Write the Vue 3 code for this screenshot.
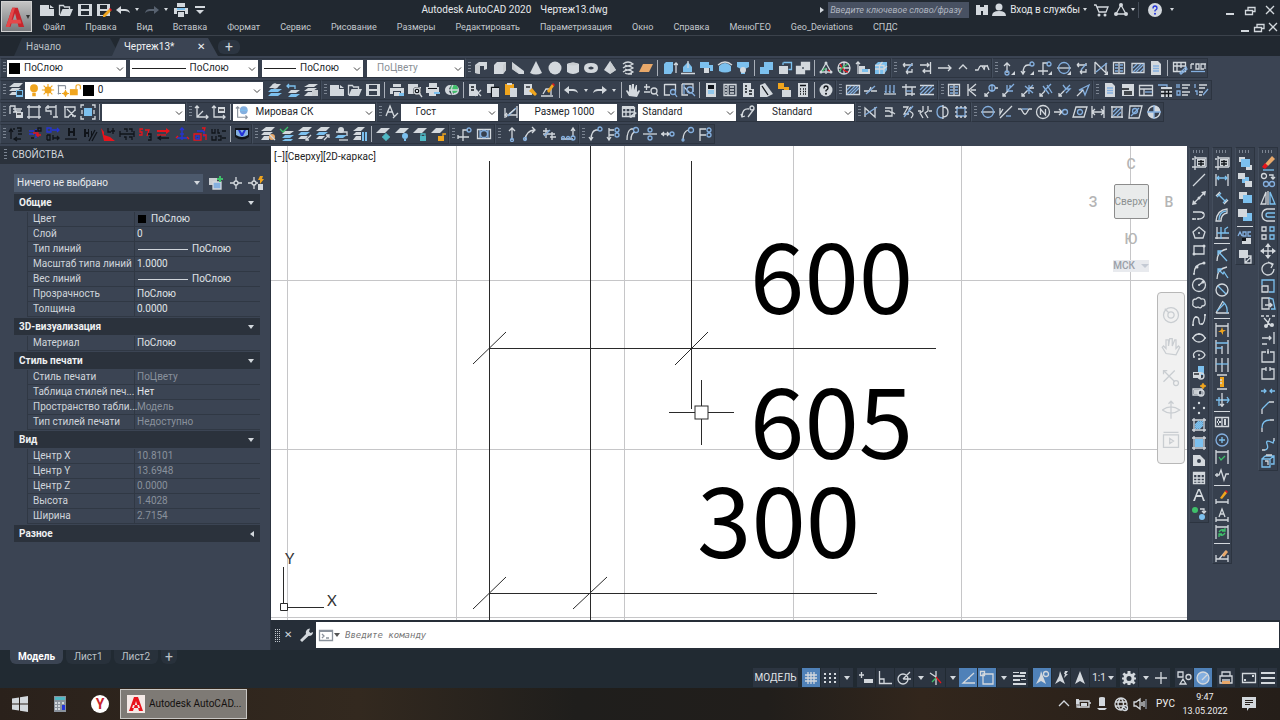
<template>
  <div class="app">
    <header class="top">
      <button class="logo" aria-label="Меню приложения">
        <svg class="logo-a" viewBox="0 0 24 24">
          <path d="M2 23L9 2h6l7 21h-6l-4-15-5 15z" fill="#c8242b" />
          <path d="M2 23L9 2h3L6 23z M7 15h11l1 4H6z" fill="#e5484a" />
        </svg>
        <i class="caret"></i>
      </button>
      <div class="top-rows">
        <div class="title-row">
          <div class="qat">
            <button v-for="(q, i) in quick" :key="i" :class="q === '>' ? 'q-more' : 'q-btn'" :aria-label="q">
              <i v-if="q === '>'" class="caret small"></i>
              <Ico v-else :name="q" />
            </button>
          </div>
          <h1 class="title"><span>Autodesk AutoCAD 2020</span><span>Чертеж13.dwg</span></h1>
          <div class="info">
            <i class="caret right"></i>
            <input class="search" type="text" aria-label="Поиск" placeholder="Введите ключевое слово/фразу">
            <button class="q-btn" aria-label="Найти"><Ico name="binoc" /></button>
            <button class="login"><Ico name="user" />Вход в службы<i class="caret small"></i></button>
            <button class="q-btn" aria-label="Магазин"><Ico name="cart" /></button>
            <button class="app-btn" aria-label="Приложения"><Ico name="apps" /><i class="caret small"></i></button>
            <button class="help-btn" aria-label="Справка"><Ico name="helpSolid" /><i class="caret small"></i></button>
            <div class="win">
              <button v-for="w in ['min', 'restore', 'close']" :key="w" :aria-label="w"><Ico :name="w" /></button>
            </div>
          </div>
        </div>
        <nav class="menu">
          <a v-for="m in menu" :key="m" href="#">{{ m }}</a>
          <div class="win doc-win">
            <button v-for="w in ['min', 'restore', 'close']" :key="w" :aria-label="w"><Ico :name="w" /></button>
          </div>
        </nav>
      </div>
    </header>

    <div class="doc-tabs">
      <button class="doc-tab">Начало</button>
      <button class="doc-tab active">Чертеж13*<span class="x">✕</span></button>
      <button class="doc-add" aria-label="Новый чертеж">+</button>
    </div>

    <div class="toolbars">
      <div v-for="(row, r) in rows" :key="r" class="bar-row">
        <div v-for="(g, gi) in row.groups" :key="gi" class="bar" :style="{ flexGrow: g.w }">
          <i class="grip"></i>
          <template v-for="(it, k) in g.items" :key="k">
            <i v-if="it === '|'" class="sep"></i>
            <button v-else-if="it === '>'" class="dd" aria-label="Список"><i class="caret small"></i></button>
            <div v-else-if="it.label" class="combo" :class="{ off: it.off }" :style="{ flexGrow: it.w }">
              <Ico v-for="n in it.icons || []" :key="n" :name="n" />
              <i v-if="it.swatch" class="swatch"></i>
              <i v-if="it.line" class="line" :style="{ flexGrow: it.line }"></i>
              <select :aria-label="it.label" :style="{ paddingLeft: (it.pad || 0) + 'px' }" :disabled="it.off">
                <option>{{ it.text }}</option>
              </select>
              <svg class="chev" viewBox="0 0 8 8"><path d="M1 2.5l3 3 3-3" /></svg>
            </div>
            <button v-else class="tool" :aria-label="it"><Ico :name="it" /></button>
          </template>
        </div>
        <div class="rest" :style="{ flexGrow: row.rest }"></div>
      </div>
    </div>

    <div class="work">
      <aside class="props">
        <h2 class="props-title"><i class="grip"></i>СВОЙСТВА</h2>
        <div class="props-pick">
          <div class="pick">
            <select aria-label="Выбранные объекты"><option>Ничего не выбрано</option></select>
            <i class="caret"></i>
          </div>
          <button aria-label="Добавить"><Ico name="pickAdd" /></button>
          <button aria-label="Выбрать"><Ico name="pickCross" /></button>
          <button aria-label="Быстрый выбор"><Ico name="pickQuick" /></button>
        </div>
        <section v-for="s in sections" :key="s.name" class="sect">
          <button class="sect-head">{{ s.name }}<i class="caret" :class="{ left: !s.rows.length }"></i></button>
          <table v-if="s.rows.length">
            <tbody>
              <tr v-for="p in s.rows" :key="p[0]">
                <th scope="row">{{ p[0] }}</th>
                <td :class="{ dim: p[2] === 'dim' }">
                  <div class="val">
                    <i v-if="p[2] === 'swatch'" class="swatch"></i>
                    <i v-if="p[2] === 'line'" class="line"></i>{{ p[1] }}
                  </div>
                </td>
              </tr>
            </tbody>
          </table>
        </section>
      </aside>

      <div class="center">
        <main class="canvas">
          <svg class="drawing" width="100%" height="100%">
            <g class="grid">
              <line v-for="x in gridX" :key="'x' + x" :x1="x" :x2="x" y1="0" y2="100%" />
              <line v-for="y in gridY" :key="'y' + y" x1="0" x2="100%" :y1="y" :y2="y" />
            </g>
            <g class="ink">
              <path d="M218.500 15V474M319.500 0V474M420.500 15V263" />
              <path d="M218 202.500H665M218 447.500H606" />
              <path d="M202 218l33-32M404 219l33-33M202 463l33-32M302 463l34-32" />
            </g>
            <g class="dims">
              <text x="479" y="168">600</text>
              <text x="479" y="313">605</text>
              <text x="426" y="412">300</text>
            </g>
            <g class="cursor">
              <path d="M398 266.500h26M437 266.500h26M430.500 234v26M430.500 273v26" />
              <rect x="424" y="260" width="13" height="13" />
            </g>
            <g class="ucs">
              <path d="M12.500 421v37M17 461.500h36M9.500 457.500h7v7h-7z" />
              <text x="14" y="418">Y</text>
              <text x="56" y="460">X</text>
            </g>
          </svg>
          <div class="vp-label">[−][Сверху][2D-каркас]</div>
          <div class="cube">
            <span class="n">С</span>
            <span class="w">З</span>
            <button class="face">Сверху</button>
            <span class="e">В</span>
            <span class="s">Ю</span>
            <button class="wcs">МСК<i class="tri"></i></button>
          </div>
          <div class="navbar">
            <button v-for="n in ['wheel', 'navPan', 'navZoom', 'navOrbit', 'navShow']" :key="n" :aria-label="n">
              <Ico :name="n" />
            </button>
          </div>
        </main>
      </div>

      <div class="rails">
        <div v-for="(c, ci) in rails" :key="ci" class="rail">
          <div class="bar tall" :style="{ flexGrow: c.h }">
            <i class="grip"></i>
            <template v-for="(it, k) in c.items" :key="k">
              <i v-if="it === '|'" class="sep"></i>
              <button v-else class="tool" :aria-label="it"><Ico :name="it" /></button>
            </template>
          </div>
          <div class="rest" :style="{ flexGrow: 474 - c.h }"></div>
        </div>
      </div>

      <div class="cmd">
        <i class="cmd-grip"></i>
        <button class="cmd-x" aria-label="Закрыть">✕</button>
        <button class="cmd-w" aria-label="Настройка"><Ico name="wrench" /></button>
        <div class="cmd-box">
          <Ico name="prompt" /><i class="caret"></i>
          <input type="text" aria-label="Команда" placeholder="Введите команду">
        </div>
      </div>
    </div>

    <footer class="status">
      <div class="layouts">
        <button class="on">Модель</button>
        <button>Лист1</button>
        <button>Лист2</button>
        <button class="add" aria-label="Новый лист">+</button>
      </div>
      <div class="modes">
        <button class="mode-text">МОДЕЛЬ</button>
        <template v-for="(m, i) in modes" :key="i">
          <button v-if="m === '>'" class="mode-dd" aria-label="Список"><i class="caret"></i></button>
          <button v-else-if="m === '1:1'" class="mode-scale">1:1<i class="caret"></i></button>
          <i v-else-if="m === '|'" class="mode-gap"></i>
          <button v-else class="mode" :class="{ on: m[0] === '*' }" :aria-label="m">
            <Ico :name="m.replace('*', '')" />
          </button>
        </template>
      </div>
    </footer>

    <div class="taskbar">
      <button class="task" aria-label="Пуск"><Ico name="windows" /></button>
      <button class="task" aria-label="Калькулятор"><Ico name="calcApp" /></button>
      <button class="task" aria-label="Браузер"><span class="ya">Y</span></button>
      <button class="task-app"><span class="task-ico"><Ico name="acad" /></span>Autodesk AutoCAD...</button>
      <div class="tray">
        <Ico name="up" /><Ico name="battery" /><Ico name="mic" /><Ico name="globe" /><Ico name="sound" />
        <span class="lang">РУС</span>
        <time class="clock"><span>9:47</span><span>13.05.2022</span></time>
        <Ico name="note" />
      </div>
    </div>
  </div>
</template>

<script setup>
import { h } from 'vue';

// lower case = stroke, upper case = fill
const colors = {
  w: '#d3d8dd', b: '#84afdf', c: '#7cc0ee', g: '#8a929c', r: '#e8141c', u: '#2434d8',
  k: '#10141a', y: '#f0a51e', n: '#3fbf6a', o: '#e8a86a', l: '#c9cdd1', d: '#586270', t: '#4fb8c4',
};

const page = 'W M3 1h7l3 3v11H3z';
const icons = {
  new: 'W M1 3h9v4h5v7H1z M11 3l4 3h-4z',
  open: 'w M1.500 13V3.500h4l1 1.500h5v2;W M4.500 7H15l-3 7H1.500z',
  save: 'W M1 2h14v12H1z M4 3v4h8V3z M4 9v4h8V9z',
  saveas: 'W M1 2h13v12H1z M4 3v4h7V3z M4 9v4h7V9z;Y M7 13l6-6 2 2-6 6H7z;R M13 7l1-1 2 2-1 1z',
  undo: 'W M1 8l5-4v3h4q4 0 5 4-2-2-5-2H6v3z',
  redo: 'W M15 8l-5-4v3H6q-4 0-5 4 2-2 5-2h4v3z',
  redoDim: 'D M15 8l-5-4v3H6q-4 0-5 4 2-2 5-2h4v3z',
  print: 'W M4 1h8v4H4z M1 6h14v6h-3V9H4v3H1z;C M4 6h8v2H4z;W M5 10h6v5H5z',
  plot: 'W M4 2h8v3H4z M1 6h14v6h-3V9H4v3H1z M5 10h6v4H5z;C M10 11h5v3h-5z',
  preview: 'W M1 2h10v3h3v7H1z;K @10,9,4;w @10,9,3 M12 11l3 4;W M9 8h2v2H9z',
  publish: 'W @6,8,5 @10,8,5;N @10,7,4;w M5 8h9M9 3q-3 5 0 10',
  batch: 'W M4 1h8v4H4z M1 5h13v6H1z;K M3 6h9v1H3z;W M4 9h7v5H4z;C M9 10h6v2H9z',
  menuMore: 'W M3 4h10v2H3z M4 8h8l-4 4z',
  binoc: 'W M2 3h4v2h4V3h4v10h-5V9H7v4H2z',
  user: 'W @8,5,3.500 M1 14q0-5 7-5t7 5z',
  cart: 'w M1 3h2l3 7h7l2-5H4;W @6,13,1.500 @12,13,1.500',
  apps: 'w M8 3L3 12h10z;W @8,3,2 @3,12,2 @13,12,2',
  helpSolid: 'W @8,8,7;u M6 6.500q0-2.500 2-2.500t2 2.200q0 1-2 2.300v1;U @8,11.800,1',
  help: 'W @8,8,6.500;k M6 6.500q0-2.500 2-2.500t2 2.200q0 1-2 2.300v1;K @8,11.800,1',
  min: 'W M4 11h8v2H4z',
  restore: 'w M3.500 8.500h7v4h-7zM6 8V5.500h7v4h-2',
  close: 'w M4 4l8 8M12 4l-8 8',
  wall: 'W M2 5l4-3h8v7l-3 1V6H7v8l-5-1z;L M2 5h5v9l-5-1z',
  box: 'W M2 5l3-3h9v8l-3 4H2z;L M11 5l3-3v8l-3 4z',
  wedge: 'W M2 2l12 9v3l-5 0L2 9z;L M2 2v7l7 5z',
  cone: 'W M8 1l6 12q-6 3-12 0z',
  sphere: 'W @8,8,6.500',
  cylinder: 'W M2 4q6-3 12 0v8q-6 4-12 0z;L M2 4q6 3 12 0-6-3-12 0z',
  torus: 'W M1 8q0-5 7-5t7 5-7 5-7-5z M5 8q3 3 6 0-3-3-6 0z',
  pyramid: 'W M8 1l6 9-6 4-6-4z;L M8 1l6 9-6 4z',
  helix: 'w M3 4q5-4 10 0-5 3-8 1M3 8q5-4 10 0-5 3-8 1M3 12q5-4 10 0-5 3-8 1M8 14h4',
  planar: 'O M5 4h10l-4 8H1z',
  extrude: 'C M2 4l2-2h7v9l-2 3H2z;w M14 13V3M12 5l2-2 2 2',
  presspull: 'C M3 12V7l5-5 4 5v5z;w M1 13.500h14M8 8V1',
  sweep: 'C M2 2h9v3h4v6h-3V8H2z;W M6 8h5v5H6z',
  revolve: 'C M2 6q6-6 12 0v5q-6 3-12 0z;w M1 5q7-6 14 0',
  loft: 'C M2 2h12v5l-4 2v5H6V9L2 7z;W @8,10,3',
  union: 'C M6 2h9v8h-4v4H2V7h4z',
  subtract: 'W M2 6h9v8H2z;c M6.500 2.500h8v7h-3M6 5V2.500',
  intersect: 'W M1 6h9v8H1z M6 2h9v8H6z;w M1.500 6.500h8v7h-8zM6.500 2.500h8v7h-8z',
  solidrot: 'w M8 3l5 9H3z M8 8v6;n M8 8l-5 4;r M10 10l3 2;W @8,3,1.500 @3,12,1.500 @13,12,1.500',
  orbit: 'w @8,8,6 M8 2v12M2 8h12;r M4 4q4 8 8 8;n M12 4q-8 4-8 8',
  flat: 'w M3 14V2M1 4l2-2 2 2;W M4 6h6v3h5v5H4z;C M7 9h6v3H7z',
  solidEdit: 'C M2 5l3-3h9v8l-3 4H2z;w M2 9h9l3-3M6.500 14V5l3-3M2 5.500h9V14',
  dimFlag: 'w M3 5h9M3 5l2-2M3 5l2 2M12 3v3M6 12h6v-3M6 12l2-2M6 12l2 2;b M12 4l-5 6',
  dimFlag2: 'w M2 5h9M9 3l2 2-2 2M12.500 2v12M5 11h7M7 9l-2 2 2 2',
  arrowR: 'w M1 8h13M11 5l3 3-3 3',
  peak: 'w M4 9l4-4 4 4',
  wave: 'w M1 10h3l2-4M6 6h7M8 6l2 3M13 5l2 5M10 10l1-4',
  lead1: 'w M7 13V3M4 6l3-3 3 3;b @7,13,2;W M15 15v-4l-4 4z',
  lead2: 'w M4 14q0-9 5-9h2M2 11l2 3 2-3;b @13,4,2;W M15 15v-4l-4 4z',
  lead3: 'w M1 11h10M6 15V3h5;b @12,4,2;W M15 15v-4l-4 4z',
  section: 'w M1 8h14;b @8,8,5.500;W M15 15v-4l-4 4z',
  zline: 'w M2 2v12M2 2l11 11V3;b M3 12l11-9;W M15 15v-4l-4 4z',
  column: 'w M2.500 2.500h11v11h-11zM8 2v12;b M4 5h3M4 8h3M4 11h3M9 5h3M9 8h3M9 11h3',
  hatchS: 'w M2 3.500h12v9H2z;b M3 12l8-8M6 12l8-8M3 8l4-4M10 12l4-4',
  sheet: page + ';b M5 6h6M5 8.500h6M5 11h6',
  tableEdit: 'w M1.500 2.500h12v9h-12zM1 6h12M5 3v9M9 3v5;b M8 13l6-6 1 2-6 5z',
  gost: 'b M1 11.500h14;w M1 4v5M1 4h3M6 4h3v5H6zM14 4h-3v5h3M14 4h2M15 4v5',
  layers: 'W M6 1h9l-4 4H1z M4 6h9l-4 3H1z M4 10h8l-3 3H1z;C M8 8h7v7H8z;k M9 10h5M9 12h5',
  layA: 'W M6 2h8l-4 4H2z;C M4 7h11l-4 3H1z M4 11h11l-4 3H1z;w @8,4,2',
  layB: 'W M6 8h9l-4 3H3z;C M6 12h9l-4 3H3z;c M2 4h8v3M4 2L2 4l2 2',
  layC: 'W M6 2h9l-4 3H1z M5 6h9l-4 3H1z M5 10h4v4H1z;L M9 8h6v6H9z',
  bulb: 'Y @8,6,4.500 M6 11h4v4H6z',
  sun: 'Y @8,8,4;y M8 1v14M1 8h14M3 3l10 10M13 3L3 13',
  frz: 'g M3 3h9M4 2v11M12 3v4M3 12h4;Y @12,12,2.500;y M12 8v8M8 12h8',
  unlock: 'Y M1 7h9v7H1z;y M8 7V4q0-2 2.500-2T13 4v3',
  cut: 'W M2 2h7v5l2 2v5H2z;k M4 5h3M4 8h3;w M8 8l6 6M14 8l-6 6',
  copyclip: 'W M2 2h7v9H2z;k M6.500 5.500h7v9h-7z;W M7 6h7v9H7z',
  paste: 'Y M2 2h9v11H2z;W M7 6h7v9H7z;W M4 1h5v2H4z',
  match: 'W M2 2h8v11H2z;Y M7 9l3-3 5 6-2 2z;k M4 5h4',
  edit: 'w M1 14h12M3 12l3-5h5v6;Y M7 9l5-7 2 2-5 7z;R M12 2l1-1 2 2-1 1z',
  hand: 'W M4 14L1 9l1-1 2 2V3h2v5l1-6h2v6l2-5h1v7l2-2 1 1-3 6z',
  zoomrt: 'w M3.500 2v6M1 5h6M1 10h6;w @11,9,3 M13 11l2 3',
  zoomwin: 'w M2.500 2.500h11v7M2.500 2v11H8;b @11,10,2.500 M13 12l2 3',
  zoomprev: 'w M2 2h11v8M2 2v11h6M4 5l6 6;b @10,8,3 M12 11l3 3M4 2v10',
  propPal: 'W M3 1h10v14H3z;K M5 3h6v4H5z;c M5 9h6M5 11h6',
  dcenter: 'w M2 2.500h12v11H2zM6 3v10M8 5h4M8 8h4M8 11h4M3 5h2M3 8h2M3 11h2',
  palettes: 'W M3 1h8v6h3v8H3z;k M5 4h2M5 7h2M5 10h2M9 9h3M9 12h3',
  sheetset: 'W M2 3l5-2 8 11-6 3H2z;k M4 4l6 9',
  markup: 'Y M1 1h6v6H1z M7 5h5v5H7z;W M5 8h9v7H5z',
  calc: 'W M3 1h10v14H3z;k M5 3.500h6M5 7h1M8 7h1M10 7h1M5 9.500h1M8 9.500h1M10 9.500h1M5 12h1M8 12h1M10 12h1',
  hatchA: 'w M1.500 3.500h13v9h-13z;b M2 12l8-8M5 12l8-8M8 12l6-6M2 8l4-4',
  breakA: 'w M1 9h5l2-4M8 9h6;b M3 12l9-8',
  piles: 'w M2 12h12;b M4 3v8M8 3v8M12 3v8M3 9l1 2M7 9l1 2M11 9l1 2',
  axes: 'w M5 2v12M1 5h14M11 5v9M5 12h9;b M5 9h6',
  hatchB: 'w M1 3.500h14M1 12.500h14;b M1 12l8-8M5 12l8-8M9 12l6-6M1 8l4-4',
  brandK: 'w M4 2v12M12 2L5 8l7 6M7 8h5',
  node: 'b @9,6,3 M9 2v8;w M2 14l4-4M2 11v3h3M12 6h3',
  node1: 'b M6 3v6h6M7 8l6-6M9 3v4;w M2 14l5-5M2 11v3h3',
  node2: 'b M5 4l8 7M13 3L6 10M9 3v9;w M2 14l5-5M2 11v3h3M10 6h4',
  node3: 'b M5 4l6 8M9 3l5 8M13 2L6 9;w M2 14l5-5M2 11v3h3',
  node4: 'b M6 3l3 4h4l-4 4M13 3L7 9;w M2 14l5-5M2 11v3h3',
  node5: 'b M4 8l10-5-4 10-2-5z;w M2 14l6-6',
  tblDoc: 'W M2 2h12v12H2z;k M2 7h7M4 10h8M4 12h8',
  tblForm: 'w M1.500 3.500h13v10h-13zM1 7h14M6 7v6;b M7 10h7',
  tblCalc: 'b M1 3h9v8;W M4 5h11v10H4z;k M4 8h11M8 8v7M11.500 8v7M4 11.500h11',
  listA: 'w M7 3h8M7 6h6M7 10h8M7 13h6;b M2 2v4M4 2v4M2 9h3v4H2z',
  listB: 'w M6 3h8M6 6h6M6 10h4M6 13h3;b M2 2v4M2 9h2v4M10 13l5-6',
  xref1: 'w M2 2h5v5h6M2 2v8M5 5h9M5 8h4;W M8 8h7v6H8z;k M9 10h4',
  xref2: 'w M3 3h10v10H3zM1 3h3M12 13h3M3 1v3M13 1v3M13 12v3M3 12v3M1 13h2M13 3h2',
  xref3: 'w M2 3h10v10M2 3v4h5v4M4 1v4M12 1v4M9 13h5',
  xref4: 'w M2 3h11v4M3 2v11h4M5 5l8 8M13 6L6 13M10 12h4',
  xref5: 'C M4 4h8v8H4z;w M1 4V1h3M12 1h3v3M15 12v3h-3M4 15H1v-3M2 6v4M14 6v4',
  ucs: 'w M3 2v11h11M1 4l2-2 2 2M12 11l2 2-2 2M3 13l6-6',
  ucsN: 'w M3 2v11h11M1 4l2-2 2 2M12 11l2 2-2 2;W M7 3h7v6H7z;k M8 6h5',
  ucsWorld: 'g M3 2v12h11M1 4l2-2 2 2M12 12l2 2-2 2;B @10,6,4.500;c M6 6h8',
  textStyle: 'w M2 12L6 2l4 10M3 8h6M9 14l5-5',
  dimStyle: 'w M2 4v10M14 2v12M2 11h12;b M5 12l8-8;w M4 9l-2 2 2 2M6 10l6-5',
  tblStyle: 'W M1 2h12v3H1z;w M1.500 3.500h12v9h-12zM1 8h12M5 4v9M9 4v9;W M8 13l6-5 2 1-6 5z',
  mlStyle: 'w M2 13q0-9 7-8M1 10l1 3 3-1M8 13l6-8;w @12,4,2',
  zz: 'w M2 13V4l10 9V3;b M2 11l12-8',
  br1: 'w M4 4h7v4l3 2M4 12h7V9l-3-2H4',
  br2: 'w M4 3h5l-4 7h5M12 3q-4 3 0 5t0 6;b M5 13l9-11',
  br3: 'w M6 2v5l-3 2 3 5M11 2v5l-3 2 3 5M12 7h3M1 7h3',
  cyl2: 'b M8 2Q2 2 2 8t6 6;w M8 1v14M8 3q5 0 5 5t-5 5',
  cloudR: 'b M4 4h8v8H4z;w M3 3h2M7 3h2M11 3h2M3 7v2M13 7v2M3 13h2M7 13h2M11 13h2M3 3v2M13 3v2M3 11v2M13 11v2',
  lev1: 'w M1 8h14;b @8,8,5.500',
  lev2: 'w M2 14L14 2M2 4v6l3-5;b M8 12h5',
  lev3: 'w M1 5h3l3 5M15 5h-3l-3 5M7 10h2;b M5 5h6',
  north: 'w @8,8,6.500;w M5.500 11V5l5 6V5',
  pt: 'w M1 8h8M6 5l3 3-3 3;b @12,8,2.500',
  parall: 'w M4 3h11l-3 10H1z;b @8,8,2.500',
  dimH: 'w M2 2v12M14 2v12M2 8h12M5 5L2 8l3 3M11 5l3 3-3 3',
  area: 'w M2 3h12M2 13h12M3 2v12M13 2v12;b M4 12l8-8M4 8l4-4M8 12l4-4',
  area2: 'w M3 2h12l-3 12H2z;b @8,7,2.500 M4 12l8-8',
  target: 'w @8,8,6;W M8 2v6h6q0-6-6-6z M8 14V8H2q0 6 6 6z;b M8 1v14M1 8h14',
  geo1: 'k M3 13V4M1 6l2-3 2 3M5 3h2M9 2h4v3h-3M13 13H7M9 11l-3 2 3 2M10 8h4',
  geo2: 'u M2 5h5M2 8h5M9 3v9;r M6 7h5v4M9 9h5;k M11 2h3v3h-3zM8 5h2M4 12h3',
  geo3: 'u M2 2h4v4H2zM7 4h7M12 2l2 2-2 2;k M2 9v5M2 9h3v5H2M8 9v5M8 12h6M12 10l2 2-2 2',
  geo4: 'K M5 2h2v3h3V2h2v8h-2V7H7v3H5z;k M2 13h12',
  geo5: 'K M2 3h2v3h2V3h1v8H6V8H4v3H2z M9 5h1v5H9z;k M7 15L13 4M10 15l5-9',
  geo6: 'R M1 2l3 4v3l6 2 5 4H4z;k M8 2v4h3M13 2v6M11 5h4',
  geo7: 'k M1 8h14M1 5v6M15 5v6M5 3h3v3M10 3h3v3M5 11h2v3M10 11h3v3',
  geo8: 'r M6 3H3v3h2v3H2M8 4h4l-2 6;k M11 8h3v3h-2M14 11v3h-3',
  geo9: 'R M2 4h9V2l4 3-4 3V6H2z;r M2 9h9;k M14 12H3M6 10l-3 2 3 2',
  geo10: 'u M8 2v12M6 4l2-2 2 2M3 12h10;r M2 12l2-2M13 11l2 2;u M6 8h4',
  geo11: 'r M2 8h7v6H2z;u M5 5h7v6M4 10h3v3H4z;r M10 2h3l-1 3M11 9h3v5',
  geo12: 'k M2 3v4h3V3M8 3v4h2M12 5h4M2 10v4h4v-4M8 10h3v4H8M12 12h4',
  geoApp: 'K M1 2h14v9q-7 5-14 0z;B M2 4h12v5q-6 4-12 0z;U M4 4h2l2 3 2-3h2l-3 6H7z',
  lw1: 'W M6 1h9l-4 4H1z M4 6h9l-4 3H1z M4 10h5v4H1z;O @12,11,3;w M9 8l6 6',
  lw2: 'n M1 3l3 3 5-5;W M6 5h9l-4 3H3z;C M6 9h9l-4 3H3z M6 13h8l-2 2H3z',
  lw3: 'W M6 1h9l-4 4H1z;C M4 6h9l-4 3H1z;W M4 10h7l-3 3H1z;w M14 9l-5 5M9 11v3h3',
  lw4: 'W M6 1h9l-4 4H1z;C M4 6h9l-4 3H1z;W M4 10h6l-3 3H1z;w M9 14l5-5M11 9h3v3',
  lw5: 'W @7,4,3;w M2 6h11v4;C M4 9h9l-4 3H1z;w M5 14h9',
  lw6: 'W M6 1h7l-4 4H1z M4 6h5v3H1z M4 10h5v4H1z;C M10 6h2v9h-2z M13 6h2v9h-2z',
  ls1: 'W M6 2h9l-5 5H1z;T @11,11,3;t M11 7v8M7 11h8',
  ls2: 'W M6 2h9l-5 5H1z;C @11,10,3 M10 13h2v2h-2z',
  ls3: 'W M6 2h9l-5 5H1z;T M8 10h6v5H8z;t M9 10V8h4v2',
  ls4: 'W M6 2h9l-5 5H1z;Y M8 10h6v5H8z;y M13 10V8h3',
  sp1: 'w M1 11h11M6 15V4h5M1 9v4;b @12,4,2',
  sp2: 'w M1.500 3.500h13v9h-13z;b @8,8,3.500 M4 4v8M12 4v8',
  sa1: 'w M8 14V2M5 5l3-3 3 3;b @8,14,1.500',
  sa2: 'w M3 14Q4 5 12 4M10 1l3 3-3 3;b @3,13,1.500',
  sa3: 'w M5 2v10M2 8h12M2 5h6M9 11h6M11 6v8;b M3 10l6-6',
  sa4: 'w M1 13h12M13 3v8M11 5l2-3 2 3;b @3,12,1.500 @8,12,1.500 @13,12,2',
  sb1: 'w M4 14q0-9 5-10h2M2 11l2 3 2-3;b @13,3,2',
  sb2: 'w M4 2v12M2 11l2 3 2-3M4 4h5M4 9h5;b @12,4,2 @12,9,2',
  sb3: 'w M3 14q0-9 4-11h3M7 14q0-7 4-8;b @12,4,2.500',
  sb4: 'w M1 8h14;b @8,4,2 @8,12,2',
  sb5: 'w M1 8h9M4 6L2 8l2 2M7 6l2 2-2 2;b @12,8,2',
  sb6: 'w M4 14q0-8 5-10;b @12,4,2.500 @4,14,1',
  sb7: 'w M3 15V3h6M3 9h6;b @12,4,2 @12,9,2',
  block: 'w M3 4h-2M4 1v14M1 12h14M4 3h11v9;W M6 4h8v7H6z;k M7 6.500h6M7 9h6M10 5v6',
  line: 'w M2 14L14 2',
  xline: 'w M3 13L13 3;W M1 15l1-5 4 4z M15 1l-5 1 4 4z @8,8,1.500',
  pline: 'w M2 5h7q5 0 4 4-1 3-6 3M2 12h3;W @7,12,1 @2,12,1 @12,6,1',
  polygon: 'w M8 2l6 5-2 6H4L2 7z;W @8,8,1',
  rect: 'w M3 4h10v8H3z;W @3,12,1.500 @13,4,1.500',
  arc: 'w M3 14Q3 4 13 3;W @3,14,1 @6,7,1.500 @13,3,1.500',
  circle: 'w @8,8,6.500 M8 8l4-3;W @8,8,1 @12,5,1.500',
  cloud: 'w M4 12q-3-1-2-4-1-4 3-4 3-3 5 0 4-1 4 3 1 4-3 4-1 3-4 1-2 1-3 0z',
  spline: 'w M2 14q0-9 3-9t3 4 3 3 3-10;W @2,13,1 @5,5,1 @11,12,1 @14,3,1',
  ellipse: 'w M2 8q2-4 6-4t6 4q-2 4-6 4T2 8z;W @2,8,1 @14,8,1 @8,4,1',
  earc: 'w M3 10q-2-4 3-6 6-1 8 4-2 4-6 4;W @3,10,1 @8,8,1 @8,12,1',
  insert: 'C M7 1h6v9H7z;W M2 7h8v6H2z;w @10,11,3;k M3 9h5',
  makeblk: 'w M2 7h9v6H2z;L M3 8h5v4H3z;w @10,11,3;Y @12,4,2;y M12 1v6M9 4h6',
  point: 'W @8,3,1.200 @3,8,1.200 @13,8,1.200 @8,13,1.200',
  hatch: 'w M3 1v14M13 1v14M1 3h14M1 13h14;c M4 12l8-8M4 8l4-4M8 12l4-4M4 10l6-6M6 12l6-6',
  gradient: 'C M4 4h8v8H4z;w M3 1v14M13 1v14M1 3h14M1 13h14',
  region: 'W M2 3h7l5 5v6H2z M6 9a2 2 0 1 0 4 0a2 2 0 1 0-4 0z',
  table: 'W M2 2h12v3H2z;w M2.500 2.500h11v11h-11zM2 8h12M2 11h12M6 5v9M10 5v9',
  mtext: 'W M7 2h2l5 12h-2l-1.300-4H5.300L4 14H2z M6 8h4L8 3.500z',
  addsel: 'N @4,5,3;C @11,12,3;w M9 4h4v4M11 6l2 2 2-2',
  dimlin: 'w M2 2v12M14 2v12;c M3 6h10M5 4L3 6l2 2M11 4l2 2-2 2',
  dimali: 'c M4 4l8 8M3 7l4-4M9 13l4-4;w M2 6l4-4M10 14l4-4',
  dimarc: 'w M2 14Q3 3 13 2v4q-6 1-6 8z;c M5 13q0-8 7-9',
  dimord: 'w M3 2v12M1 13h14;c M7 2v12M3 8h12M11 8V4l3-2',
  dimrad: 'w M13 2Q3 4 3 14;c M4 4l9 10M4 8V4h4',
  dimjog: 'w M13 2Q3 4 3 14;c M4 4l5 5 1-2 4 6M4 8V4h4',
  dimdia: 'w @8,8,6;c M4 4l8 8',
  dimang: 'w M2 14L9 2M2 14h13;c M9 3q5 4 4 11M3 12l8-8',
  dimq: 'w M2 1v14M14 1v14M2 4h12;Y M8 5l1 3h3l-3 2v3l-2-3H4l3-2z',
  dimbase: 'w M2 1v14M8 7v8M14 1v14;c M2 4h12M2 9h6',
  dimcont: 'w M2 1v14M8 1v14M14 1v14;c M2 7h12',
  dimspace: 'w M3 1h10M3 15h10;Y M6 3h4v10H6z;w M6 6h2M6 9h2',
  dimbreak: 'c M2 8h13M5 5v9M13 5l2 3-2 3;w M8 1v14M6 12l2 2 2-2',
  tol: 'w M1.500 3.500h13v9h-13zM8 3v9;W M3 7h4v2H3z M4 5h1v6H4z M10 5h2v6h-2z',
  cen: 'b @8,8,6;c M8 5v6M5 8h6',
  insp: 'w M2 1v14M14 1v14M2 3h12;n M5 8l2 3 4-4',
  jog: 'w M1 8h4l2-5 3 10 2-6h3M3 6v4',
  dimed: 'w M2 10v5M14 10v5M2 13h12;Y M6 9l5-7 2 2-5 6z;R M11 2l1-1 2 2-1 1z',
  dimtx: 'w M2 10v5M14 10v5M2 13h12M5 10l3-8 3 8M6 7h4',
  dimup: 'w M2 1v14M14 1v14M2 3h12;n M5 8q3-4 6-1M11 9q-3 4-6 1M11 4v3H8M5 13v-3h3',
  dimst: 'w M2 8v7M14 8v7M2 12h12M5 12l7-8;O M8 8l4-5 2 2-4 5z',
  ord1: 'W M2 2h6v5H2z M9 10h6v5H9z;C M4 4h9v8H4z',
  ord2: 'C M5 5h7v6H5z;W M1 1h7v6H1z M8 9h7v6H8z',
  ord3: 'W M2 2h8v7H2z;C M6 5h9v8H6z',
  ord4: 'C M6 6h9v8H6z;W M1 2h9v8H1z',
  ord5: 'b M1 6l2-4 2 4M6 2v4h3V2zM14 2h-3v4h3;W M5 8h9v6H5z;K M5 8h4v3H5z',
  ord6: 'W M2 2h9v8H2z;w M8 8h6v7H8zM8 15l6-6',
  eraser: 'O M5 9l7-8 3 3-7 7z;R M2 12l3-4 3 3-3 3z;c M3 15h11',
  copy: 'w @4,4,2.500 M9 3h4v3M11 5l2 2 2-2;b @6,12,2.500 @12,12,2.500',
  mirror: 'w M6 2v12H1zM8 1v14;c M10 2v12h5z',
  offset: 'w M15 2H7Q2 3 2 8t5 6h8;c M15 6H8Q6 6 6 8t2 2h7',
  array: 'w M2 2h4v4H2zM2 10h4v4H2z;c M10 2h4v4h-4zM10 10h4v4h-4z',
  move: 'w M8 1v14M1 8h14;W M8 0l3 4H5z M8 16l3-4H5z M0 8l4-3v6z M16 8l-4-3v6z',
  rotate: 'w M12 4.500A6 6 0 1 0 14 9M8 2l5 2-2 4',
  scale: 'c M2 7V2h12v12H9;w M2 8h6v6H2z',
  stretch: 'w M2 3h7v11H2zM5 10h7M10 8l2 2-2 2;c M9 3l4 1 2 10h-4',
  trim: 'w M1 3h3M6 3h3M12 3h3M4 5l7 8M10 5l-3 8;W @6,13,2 @12,12,2',
  extend: 'w M2 8h9M9 6l2 2-2 2M14 2v12M2 14h5',
  brkpt: 'w M6 4H2v10h12V4h-4M8 1v5;W @8,4,1',
  brk: 'w M6 4H2v10h12V4h-4M6 2v4M10 2v4',
  join: 'c M1 8h5M15 8h-5M4 6l2 2-2 2M12 6l-2 2 2 2',
  chamfer: 'w M2 14V9M9 2h5;c M2 9l7-7',
  fillet: 'w M2 14v-4M10 2h4;c M2 10q0-8 8-8',
  blend: 'w M2 14h3M14 2v3;c M5 14q4-1 2-6t6-1l1-3',
  explode: 'c M2 6h8v8H2zM5 3h9v8h-3M2 6l3-3M10 6l4-3;w M6 2h6M5 8h3v4',
  pickAdd: 'L M1 3h8v7H1z;B M5 7h8v7H5z;w M5 7h8v7H5z;N M11 1h2v2h2v2h-2v2h-2V5H9V3h2z',
  pickCross: 'w M8 2v4M8 10v4M2 8h4M10 8h4;w @8,8,2',
  pickQuick: 'w M6 2v4M6 10v4M0 8h4M8 8h2;w @6,8,2;Y M12 1h3l-1 3h2l-4 5v-4h-2z;W M10 9h5v6h-5z',
  wrench: 'W M2 13l6-6q-1-3 2-5l2-.500-1 3 1.500 1.500L15 5q0 4-4.500 4L4 15z',
  prompt: 'g M1.500 3.500h13v10h-13zM4 7l2 2-2 2M8 11h3;G M1 3h14v2H1z',
  grid: 'w M5 2v12M8 2v12M11 2v12M2 5h12M2 8h12M2 11h12',
  snap: 'W M2 3h2v2H2z M7 3h2v2H7z M12 3h2v2h-2z M2 7h2v2H2z M7 7h2v2H7z M12 7h2v2h-2z M2 11h2v2H2z M7 11h2v2H7z M12 11h2v2h-2z',
  dyn: 'w M1 5h5M3.500 2v6;W M6 9h9v4H6z',
  ortho: 'w M2.500 1v12.500H15M3 9h4v4',
  polar: 'w @7,9,5 M7 9l7-7M7 9h8',
  iso: 'w M8 1v14M2 3l6 4;r M8 7l5 6;n M8 8L4 12',
  otrack: 'w M14 3L3 13h12;W @9,8,1',
  osnap: 'w M4 4h10v10H4z;w M1.500 1.500h4v4h-4z',
  lwt: 'W M2 2h6v1H2z M9 2h6v2H9z M2 5h12v2H2z M2 9h7v2H2z M10 9h5v1h-5z M2 13h13v2H2z',
  anno1: 'W M7 1l5 13-5-3-5 3 4-8z;w @12,4,2.500',
  anno2: 'W M7 1l5 13-5-3-5 3 4-8z M12 1l3 0-2 3h2l-4 4 1-4h-1z',
  anno3: 'W M8 1l5 13-5-3-5 3z',
  gear: 'W M6.500 1h3v2.500l1.500.6 1.800-1.700 1.900 1.900L13 6l.6 1.500H15v2h-1.500L13 11l1.500 1.700-1.900 1.900L11 13l-1.500.6V15h-3v-1.500L5 13l-1.700 1.600-1.900-1.900L3 11l-.6-1.500H1v-2h1.500L3 6 1.400 4.300l1.900-1.900L5 4l1.500-.5z M5.500 8.500a2.500 2.500 0 1 0 5 0a2.500 2.500 0 1 0-5 0z',
  plus: 'w M8 2v12M2 8h12',
  isolate: 'w M2 2h5v5H2zM7 9l3 5H4z;w @12.500,7,2.500',
  hw: 'B @8,8,6;w @8,8,6 M7 10l5-5',
  prn: 'w M4 6V2h8v4M2 6h12v7H2zM4 10h8;O M4 11h8v3H4z',
  full: 'w M1.500 3.500h13v9h-13z;W M11 5h2v2h-2z M3 9h2v2H3z',
  burger: 'W M1 2h14v2H1z M1 7h14v2H1z M1 12h14v2H1z',
  windows: 'W M0 2.500l7-1V7.500H0z M8 1.300L16 0v7.500H8z M0 8.500h7v6l-7-1z M8 8.500h8V16l-8-1.300z',
  calcApp: 'G M2 0h12v16H2z;T M3 1h10v3H3z;W M3 6h2v2H3z M6 6h2v2H6z M10 6h2v2h-2z M3 9h2v2H3z M6 9h2v2H6z M3 12h2v2H3z M6 12h2v2H6z;U M10 9h3v5h-3z',
  acad: 'R M1 15L6 1h4l5 14h-4L8 5l-3 10z M5 9h6l1 3H4z',
  up: 'w M3 10l5-5 5 5',
  battery: 'w M4 5h10v6H4zM14 7h2;W M6 7h6v3H6z M1 3h3v5H1z;w M2 8v3h3',
  mic: 'W M5 2q0-1 3-1t3 1v8H5z M3 12h10l-2 2H5z',
  globe: 'w @8,8,6 M8 2q-6 6 0 12M8 2q5 6 0 12M2 6h12M2 10h8;K @12,12,3;w @12,12,2.500 M10 10l4 4',
  sound: 'w M2 6h2l4-3v10l-4-3H2zM10 6v4M12 5v6;g M14 3v10',
  note: 'W M1 1h14v11H8l-2 3v-3H1z M4 4v1h8V4z M4 6v1h8V6z M4 8v1h5V8z',
  wheel: 'l @8,8,6 @8,8,2.500 M3 3l3 3',
  navPan: 'l M4 14L1 9l1-1 2 2V3h2v5l1-6h2v6l2-5h1v7l2-2 1 1-3 6z',
  navZoom: 'l M2 2l9 9M11 2l-9 9M2 5V2h3;l @12,12,2',
  navOrbit: 'l M8 1v14M1 8q7-5 14 0-7 5-14 0M6 3l2-2 2 2',
  navShow: 'l M2 3h12v10H2zM7 6l3 2-3 2zM2 1h12',
};

const ring = (_, x, y, r) => `M${x - r} ${y}a${r} ${r} 0 1 0 ${r * 2} 0a${r} ${r} 0 1 0 ${-r * 2} 0z`;

const Ico = (props) => h('svg', { viewBox: '0 0 16 16', class: 'ico' }, (icons[props.name] || '').split(';').map((part) => {
  const key = part[0];
  const color = colors[key.toLowerCase()];
  const solid = key !== key.toLowerCase();
  return h('path', {
    d: part.slice(2).replace(/@([\d.]+),([\d.]+),([\d.]+)/g, (m, x, y, r) => ring(m, +x, +y, +r)),
    fill: solid ? color : 'none',
    stroke: solid ? 'none' : color,
    'fill-rule': 'evenodd',
  });
}));
Ico.props = ['name'];

const quick = ['new', 'open', 'save', 'saveas', 'undo', '>', 'redoDim', '>', 'print', 'menuMore'];
const menu = ['Файл', 'Правка', 'Вид', 'Вставка', 'Формат', 'Сервис', 'Рисование', 'Размеры', 'Редактировать',
  'Параметризация', 'Окно', 'Справка', 'МенюГЕО', 'Geo_Deviations', 'СПДС'];

const rows = [
  {
    rest: 72,
    groups: [
      { w: 466, items: [
        { label: 'Цвет', text: 'ПоСлою', w: 119, swatch: true, pad: 4 },
        { label: 'Тип линий', text: 'ПоСлою', w: 128, line: 40, pad: 4 },
        { label: 'Вес линий', text: 'ПоСлою', w: 100, line: 26, pad: 4 },
        { label: 'Стиль печати', text: 'ПоЦвету', w: 96, off: true, pad: 8 },
      ] },
      { w: 427, items: ['wall', 'box', 'wedge', 'cone', 'sphere', 'cylinder', 'torus', 'pyramid', 'helix', 'planar', '|',
        'extrude', 'presspull', 'sweep', 'revolve', 'loft', '|', 'union', 'subtract', 'intersect', '|',
        'solidrot', 'orbit', 'flat', 'solidEdit'] },
      { w: 99, items: ['dimFlag', 'dimFlag2', 'arrowR', 'peak', 'wave'] },
      { w: 216, items: ['lead1', 'lead2', 'lead3', 'section', 'dimFlag', 'zline', 'column', 'hatchS', 'sheet', '|',
        'tableEdit', 'gost'] },
    ],
  },
  {
    rest: 69,
    groups: [
      { w: 321, items: ['layers', { label: 'Слой', text: '0', w: 239, icons: ['bulb', 'sun', 'frz', 'unlock'], swatch: true, pad: 4 },
        'layA', 'layB', 'layC'] },
      { w: 518, items: ['new', 'open', 'save', '|', 'plot', 'preview', 'batch', 'publish', '|',
        'cut', 'copyclip', 'paste', 'match', 'edit', '|', 'undo', '>', 'redo', '>', '|',
        'hand', 'zoomrt', 'zoomwin', 'zoomprev', '|',
        'propPal', 'dcenter', 'palettes', 'sheetset', 'markup', 'calc', '|', 'help'] },
      { w: 100, items: ['hatchA', 'breakA', 'piles', 'axes', 'hatchB'] },
      { w: 155, items: ['column', 'brandK', 'node', 'node1', 'node2', 'node3', 'node4', 'node5'] },
      { w: 117, items: ['sheet', 'tblDoc', 'tblForm', 'tblCalc', 'listA', 'listB'] },
    ],
  },
  {
    rest: 117,
    groups: [
      { w: 185, items: ['xref1', 'xref2', 'xref3', 'xref4', 'xref5', '|', { label: 'Ссылка', text: '', w: 79, off: true }] },
      { w: 190, items: ['ucs', 'ucsN', '|', { label: 'ПСК', text: 'Мировая СК', w: 138, icons: ['ucsWorld'], pad: 6 }] },
      { w: 481, items: [
        'textStyle', { label: 'Стиль текста', text: 'Гост', w: 96, pad: 13 },
        'dimStyle', { label: 'Размерный стиль', text: 'Размер 1000', w: 96, pad: 13 },
        'tblStyle', { label: 'Стиль таблиц', text: 'Standard', w: 96, pad: 2 },
        'mlStyle', { label: 'Стиль мультивыносок', text: 'Standard', w: 96, pad: 13 },
      ] },
      { w: 115, items: ['zz', 'br1', 'br2', 'br3', 'cyl2', 'cloudR'] },
      { w: 192, items: ['lev1', 'lev2', 'lev3', 'north', 'pt', 'parall', 'dimH', 'area', 'area2', 'target'] },
    ],
  },
  {
    rest: 569,
    groups: [
      { w: 252, items: ['geo1', 'geo2', 'geo3', 'geo4', 'geo5', 'geo6', 'geo7', 'geo8', 'geo9', 'geo10', 'geo11', 'geo12', '|', 'geoApp'] },
      { w: 196, items: ['lw1', 'lw2', 'lw3', 'lw4', 'lw5', 'lw6', '|', 'ls1', 'ls2', 'ls3', 'ls4'] },
      { w: 45, items: ['sp1', 'sp2'] },
      { w: 82, items: ['sa1', 'sa2', 'sa3', 'sa4'] },
      { w: 136, items: ['sb1', 'sb2', 'sb3', 'sb4', 'sb5', 'sb6', 'sb7'] },
    ],
  },
];

const rails = [
  { h: 376, items: ['block', 'line', 'xline', 'pline', 'polygon', 'rect', 'arc', 'circle', 'cloud', 'spline', 'ellipse',
    'earc', 'insert', 'makeblk', 'point', 'hatch', 'gradient', 'region', 'table', 'mtext', 'addsel'] },
  { h: 418, items: ['block', 'dimlin', 'dimali', 'dimarc', 'dimord', '|', 'dimrad', 'dimjog', 'dimdia', 'dimang', '|',
    'dimq', 'dimbase', 'dimcont', 'dimspace', 'dimbreak', '|', 'tol', 'cen', 'insp', 'jog', '|',
    'dimed', 'dimtx', 'dimup', '|', 'dimst'] },
  { h: 117, items: ['ord1', 'ord2', 'ord3', 'ord4', '|', 'ord5', 'ord6'] },
  { h: 324, items: ['eraser', 'copy', 'mirror', 'offset', 'array', 'move', 'rotate', 'scale', 'stretch', 'trim', 'extend',
    'brkpt', 'brk', 'join', 'chamfer', 'fillet', 'blend', 'explode'] },
];

const sections = [
  { name: 'Общие', rows: [
    ['Цвет', 'ПоСлою', 'swatch'],
    ['Слой', '0'],
    ['Тип линий', 'ПоСлою', 'line'],
    ['Масштаб типа линий', '1.0000'],
    ['Вес линий', 'ПоСлою', 'line'],
    ['Прозрачность', 'ПоСлою'],
    ['Толщина', '0.0000'],
  ] },
  { name: '3D-визуализация', rows: [['Материал', 'ПоСлою']] },
  { name: 'Стиль печати', rows: [
    ['Стиль печати', 'ПоЦвету', 'dim'],
    ['Таблица стилей печ...', 'Нет'],
    ['Пространство табли...', 'Модель', 'dim'],
    ['Тип стилей печати', 'Недоступно', 'dim'],
  ] },
  { name: 'Вид', rows: [
    ['Центр X', '10.8101', 'dim'],
    ['Центр Y', '13.6948', 'dim'],
    ['Центр Z', '0.0000', 'dim'],
    ['Высота', '1.4028', 'dim'],
    ['Ширина', '2.7154', 'dim'],
  ] },
  { name: 'Разное', rows: [] },
];

const gridX = [16.5, 185.5, 353.5, 522.5, 690.5, 859.5];
const gridY = [134.5, 303.5, 471.5];

const modes = ['|', '*grid', 'snap', '>', '|', 'dyn', 'ortho', 'polar', '>', 'iso', '>', '*otrack', '*osnap', '>', 'lwt', '|',
  '*anno1', 'anno2', 'anno3', '1:1', '|', 'gear', '>', 'plus', '|', 'isolate', '*hw', '|', 'prn', '|', 'full', 'burger'];
</script>

<style>
body {
  background: #212830;
}
</style>

<style scoped>
.app {
  min-height: 100vh;
  display: flex;
  flex-direction: column;
  font-family: Roboto, "Noto Sans", sans-serif;
  font-size: 10px;
  line-height: 14px;
  color: #d0d5db;
  background: #212830;
  overflow: hidden;
}

button,
input,
select {
  font: inherit;
  color: inherit;
  margin: 0;
  padding: 0;
  border: 0;
  background: none;
  outline: none;
}

button {
  display: flex;
  align-items: center;
  justify-content: center;
}

a {
  color: inherit;
  text-decoration: none;
}

.ico {
  width: 16px;
  height: 16px;
  flex: none;
  display: block;
  stroke-width: 1.3;
}

.caret {
  flex: none;
  border: 3px solid transparent;
  border-top: 4px solid #d3d8dd;
  border-bottom: 0;
}

.caret.small {
  border-width: 3px 2px 0;
}

.caret.right {
  border: 3px solid transparent;
  border-left: 4px solid #d3d8dd;
  border-right: 0;
}

.caret.left {
  border: 3px solid transparent;
  border-right: 4px solid #d3d8dd;
  border-left: 0;
}

/* title and menu */
.top {
  display: flex;
  height: 36px;
  box-sizing: border-box;
  border-bottom: 1px solid #3b424b;
}

.logo {
  width: 31px;
  height: 31px;
  margin: 1px;
  background: linear-gradient(#c4c4c4, #77797c);
  border: 1px solid #d0d0d0;
}

.logo-a {
  width: 22px;
  height: 24px;
}

.logo .caret {
  border-top-color: #333;
  border-width: 4px 2px 0;
}

.top-rows {
  flex: 1;
  min-width: 0;
}

.title-row {
  display: flex;
  align-items: center;
  height: 19px;
}

.qat {
  display: flex;
  padding-left: 4px;
}

.q-btn {
  width: 19px;
  height: 18px;
}

.q-more {
  width: 10px;
}

.title {
  flex: 1;
  margin: 0;
  display: flex;
  justify-content: center;
  gap: 9px;
  font-size: 10px;
  font-weight: 400;
  color: #e6e9ec;
}

.info {
  display: flex;
  align-items: center;
}

.search {
  width: 141px;
  height: 16px;
  margin-left: 4px;
  margin-right: 3px;
  padding: 0 2px;
  background: #485162;
  box-sizing: border-box;
}

.search::placeholder {
  color: #b0b6c0;
  font-style: italic;
  font-size: 9px;
  opacity: 1;
}

.login {
  gap: 3px;
  color: #e6e9ec;
  margin-right: 4px;
}

.app-btn {
  gap: 2px;
  width: 28px;
}

.help-btn {
  gap: 7px;
  width: 44px;
  border-left: 1px solid #444c57;
}

.win {
  display: flex;
  padding-left: 38px;
}

.win button {
  width: 20px;
}

.doc-win {
  margin-left: auto;
  padding: 0;
}

.doc-win button {
  width: 14px;
}

.menu {
  display: flex;
  align-items: center;
  height: 16px;
  font-size: 9px;
  color: #c4c9ce;
}

.menu a {
  padding: 0 10px;
}

/* document tabs */
.doc-tabs {
  display: flex;
  height: 20px;
  padding-left: 14px;
  box-sizing: border-box;
}

.doc-tab {
  width: 106px;
  padding-left: 12px;
  margin-top: 2px;
  justify-content: flex-start;
  background: #2c3541;
  color: #bcc1c7;
  clip-path: polygon(8px 0, 96px 0, 100% 100%, 0 100%);
}

.doc-tab.active {
  width: 106px;
  margin-left: -8px;
  padding: 0 13px 0 12px;
  justify-content: space-between;
  background: #3b4453;
  color: #f0f2f4;
}

.doc-add {
  width: 22px;
  height: 14px;
  margin: 4px 0 0;
  border-radius: 6px;
  background: #2c3541;
  font-size: 14px;
}

/* toolbars */
.toolbars {
  display: flex;
  flex-direction: column;
  gap: 2px;
  padding: 2px 0;
  background: #3b4453;
}

.bar-row {
  display: flex;
  height: 20px;
}

.bar {
  flex: 1 1 0;
  min-width: 0;
  display: flex;
  align-items: center;
  box-sizing: border-box;
  background: #37404e;
  border: 1px solid #2c3440;
  border-left-color: #444e5d;
}

.rest {
  flex: 1 1 0;
}

.grip {
  flex: none;
  width: 3px;
  height: 12px;
  margin: 0 1px 0 2px;
  background: repeating-linear-gradient(#7c8592 0 1px, transparent 1px 3px);
}

.sep {
  flex: none;
  width: 1px;
  height: 16px;
  margin: 0 2px;
  background: #a9afb8;
}

.tool {
  flex: 18 1 0;
  min-width: 0;
}

.dd {
  flex: none;
  width: 10px;
}

.combo {
  position: relative;
  flex: 1 1 0;
  min-width: 0;
  height: 17px;
  margin-right: 4px;
  display: flex;
  align-items: center;
  background: #fff;
  color: #22262b;
  box-sizing: border-box;
  padding: 0 2px;
}

.combo:last-child {
  margin-right: 0;
}

.combo select {
  flex: 50 1 0;
  min-width: 0;
  height: 16px;
  appearance: none;
}

.combo .ico {
  width: 14px;
}

.combo.off {
  color: #8a8f96;
}

.combo.off select {
  opacity: 1;
}

.swatch {
  flex: none;
  width: 11px;
  height: 11px;
  background: #000;
}

.line {
  height: 1px;
  background: #222;
}

.combo .line {
  flex: 1 1 0;
}

.chev {
  position: absolute;
  right: 2px;
  top: 5px;
  width: 8px;
  height: 8px;
  pointer-events: none;
  fill: none;
  stroke: #444;
}

/* work area */
.work {
  flex: 1;
  display: grid;
  grid-template-columns: 271px minmax(0, 1fr) 93px;
  grid-template-rows: minmax(474px, 1fr) 30px;
  background: #3b4453;
}

.props {
  grid-row: 1 / 3;
  border-right: 1px solid #2c3440;
}

.props-title {
  display: flex;
  align-items: center;
  gap: 4px;
  height: 18px;
  margin: 0 0 10px;
  padding-left: 2px;
  font-size: 10px;
  font-weight: 400;
  background: #2b323c;
}

.props-pick {
  display: flex;
  align-items: center;
  gap: 4px;
  margin: 0 6px 2px 14px;
}

.pick {
  flex: 1;
  display: flex;
  align-items: center;
  height: 18px;
  padding: 0 3px;
  margin-right: 1px;
  background: #4c596c;
  color: #e6e9ec;
}

.pick select {
  flex: 1;
  appearance: none;
}

.sect {
  margin: 0 10px 0 14px;
}

.sect-head {
  width: 100%;
  height: 17px;
  margin: 1px 0;
  padding: 0 6px 0 5px;
  justify-content: space-between;
  background: #2b323c;
  color: #eef0f2;
  font-weight: 700;
}

.sect table {
  width: 233px;
  margin-left: 13px;
  table-layout: fixed;
  border-collapse: collapse;
}

.sect th,
.sect td {
  height: 14px;
  padding: 0;
  line-height: 14px;
  border: solid #303844;
  border-width: 0 0 1px 1px;
  white-space: nowrap;
  text-align: left;
  font-weight: 400;
}

.sect th {
  width: 101px;
  padding-left: 5px;
}

.sect td {
  padding-left: 2px;
  color: #e0e4e8;
}

.sect td.dim {
  color: #89919c;
}

.val {
  display: flex;
  align-items: center;
}

.val .swatch {
  width: 8px;
  height: 8px;
  margin: 0 5px 0 1px;
}

.val .line {
  width: 50px;
  margin: 0 4px 0 1px;
  background: #d0d5db;
}

.center {
  display: flex;
}

.canvas {
  position: relative;
  flex: 1;
  background: #fff;
  overflow: hidden;
}

.drawing {
  position: absolute;
  inset: 0;
}

.grid line {
  stroke: #c6c6c8;
}

.ink path,
.cursor path,
.ucs path {
  fill: none;
  stroke: #2a2a2a;
}

.dims {
  font-family: "Noto Sans CJK JP", sans-serif;
  font-size: 98px;
  fill: #000;
}

.cursor rect {
  fill: #fff;
  stroke: #2a2a2a;
}

.ucs text {
  font-family: Lato, sans-serif;
  font-size: 15px;
  fill: #333;
}

.vp-label {
  position: absolute;
  left: 3px;
  top: 4px;
  color: #222;
}

.cube {
  position: absolute;
  top: 9px;
  right: 8px;
  display: grid;
  grid-template-columns: 20px 56px 20px;
  grid-template-rows: 18px 57px 18px 36px;
  place-items: center;
  font-size: 14px;
  font-weight: 500;
  color: #b5b5b5;
}

.cube .n,
.cube .s {
  grid-column: 1 / 4;
}

.cube .wcs {
  grid-column: 1 / 4;
  gap: 6px;
  width: 36px;
  height: 12px;
  background: #e8eaee;
  color: #999fa8;
  font-size: 10px;
}

.tri {
  border: 4px solid transparent;
  border-top-color: #c4cad4;
  border-bottom: 0;
}

.cube .face {
  width: 35px;
  height: 35px;
  border: 1px solid #8c8c8c;
  border-radius: 2px;
  background: #e9ebeb;
  color: #8b9090;
  font-size: 10px;
  font-weight: 400;
}

.navbar {
  position: absolute;
  right: 2px;
  top: 146px;
  width: 26px;
  height: 170px;
  display: flex;
  flex-direction: column;
  justify-content: space-evenly;
  align-items: center;
  border: 1px solid #b8b8b8;
  border-radius: 4px;
  background: #f1f1f1;
}

.navbar .ico {
  width: 20px;
  height: 20px;
  stroke-width: 1;
}

/* vertical toolbars */
.rails {
  display: flex;
  gap: 3px;
  padding: 1px 2px 0;
}

.rail {
  flex: 1;
  display: flex;
  flex-direction: column;
}

.tall {
  flex-direction: column;
}

.tall .grip {
  width: 12px;
  height: 3px;
  margin: 2px 0 1px;
  background: repeating-linear-gradient(90deg, #7c8592 0 1px, transparent 1px 3px);
}

.tall .sep {
  width: 16px;
  height: 1px;
  margin: 2px 0;
  background: #d3d8dd;
}

.tall .tool {
  min-height: 0;
}

/* command line */
.cmd {
  grid-column: 2 / 4;
  display: flex;
  align-items: center;
  padding: 2px 1px 2px 4px;
  background: #262e38;
}

.cmd-grip {
  flex: none;
  width: 5px;
  height: 14px;
  background: repeating-linear-gradient(#262e38 0 1px, transparent 1px 2px),
    repeating-linear-gradient(90deg, #c2c7cd 0 1px, transparent 1px 2px);
}

.cmd-x {
  width: 15px;
}

.cmd-w {
  width: 21px;
}

.cmd-box {
  flex: 1;
  align-self: stretch;
  display: flex;
  align-items: center;
  padding-left: 2px;
  background: #fff;
}

.cmd-box .caret {
  border-top-color: #555;
}

.cmd-box input {
  flex: 1;
  padding-left: 5px;
  color: #333;
  font-family: "DejaVu Sans Mono", monospace;
  font-size: 9px;
  font-style: italic;
}

.cmd-box input::placeholder {
  color: #777;
  opacity: 1;
}

/* status bar */
.status {
  display: flex;
  justify-content: space-between;
  height: 38px;
  background: #212a32;
}

.layouts {
  display: flex;
  height: 14px;
  padding-left: 10px;
  gap: 3px;
}

.layouts button {
  padding: 0 8px;
  background: #28313b;
  color: #bcc1c7;
  border-radius: 0 0 6px 6px;
}

.layouts .on {
  background: #3b4453;
  color: #fff;
  font-weight: 700;
}

.layouts .add {
  font-size: 14px;
  padding: 0 4px;
}

.modes {
  display: flex;
  align-self: flex-end;
  height: 19px;
  margin-bottom: 1px;
  padding-right: 2px;
}

.modes button {
  background: #2c3541;
  color: #e0e4e8;
}

.modes .mode-text {
  width: 45px;
}

.modes .mode {
  width: 18px;
  margin-right: 1px;
}

.modes .mode.on {
  background: #4f81b8;
}

.mode-dd {
  width: 13px;
}

.modes .mode-scale {
  width: 26px;
  gap: 2px;
}

.mode-gap {
  width: 4px;
}

/* taskbar */
.taskbar {
  display: flex;
  align-items: center;
  height: 32px;
  background: linear-gradient(90deg, #2a211b, #33291f 28%, #1f1e1c 45%, #211e1b 60%, #32261c 72%, #251e19);
}

.task {
  width: 40px;
  height: 32px;
}

.task .ico {
  height: 18px;
}

.ya {
  width: 18px;
  height: 18px;
  border-radius: 50%;
  background: #fff;
  color: #c8242b;
  font-size: 14px;
  font-weight: 700;
  line-height: 18px;
}

.task-app {
  width: 127px;
  height: 30px;
  justify-content: flex-start;
  gap: 4px;
  padding-left: 6px;
  background: #7e7a75;
  border: 1px solid #c9c7c4;
  color: #14110f;
}

.task-ico {
  padding: 1px;
  background: #f4e9e6;
}

.tray {
  margin-left: auto;
  display: flex;
  align-items: center;
  gap: 3px;
  padding-right: 23px;
  color: #eee;
}

.lang {
  margin: 0 4px 0 5px;
}

.clock {
  width: 46px;
  margin-right: 10px;
  display: flex;
  flex-direction: column;
  font-size: 9px;
  text-align: center;
}
</style>
